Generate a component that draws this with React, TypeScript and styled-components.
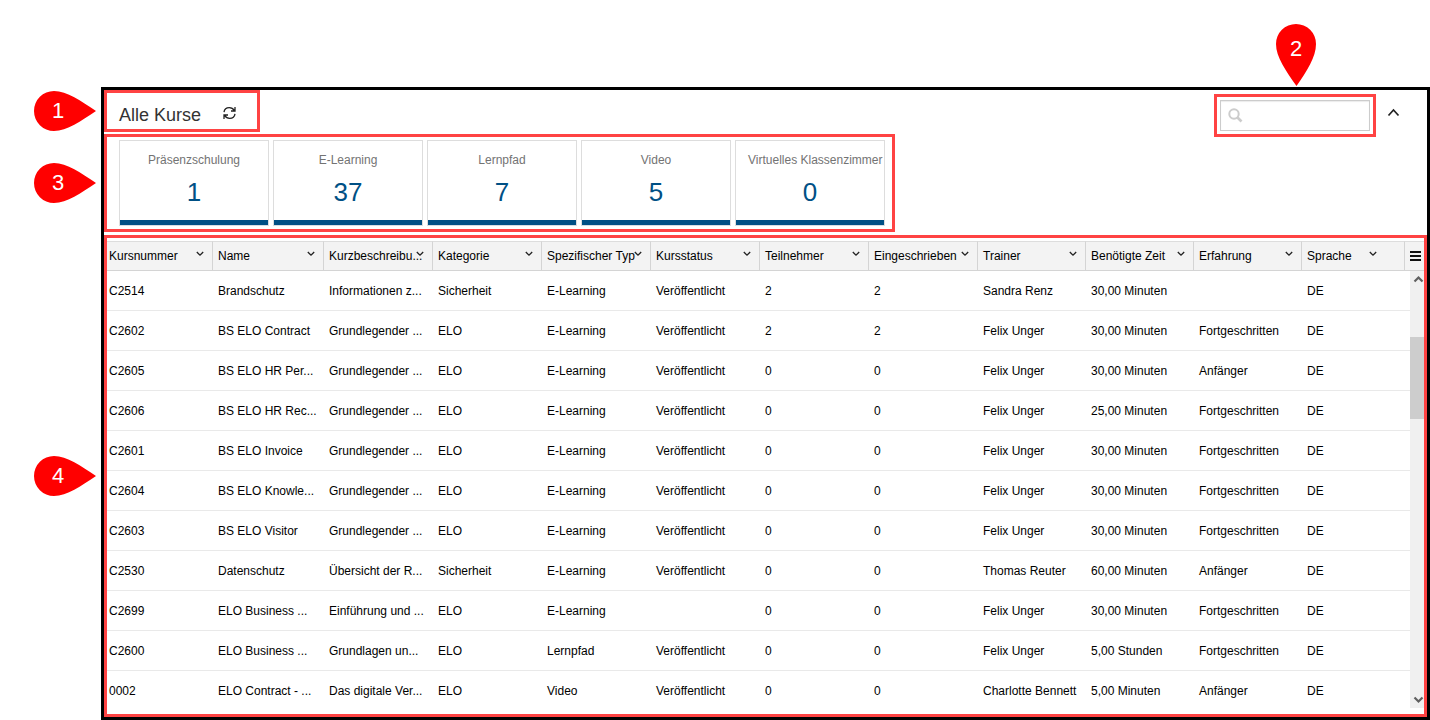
import React from "react";
import styled, { createGlobalStyle, css } from "styled-components";

const GlobalStyle = createGlobalStyle`
  * { box-sizing: border-box; }
  body {
    margin: 0;
    background: #fff;
    font-family: "Liberation Sans", Arial, sans-serif;
    font-size: 12px;
    color: #000;
  }
  button { font: inherit; }
`;

const Page = styled.div`
  display: flex;
  flex-direction: column;
  min-height: 100vh;
  padding: 87px 0 0 101px;
`;

const Frame = styled.main`
  flex: 1;
  display: flex;
  flex-direction: column;
  border: 3px solid #000;
`;

const marked = css`
  position: relative;
  &::after {
    content: "";
    position: absolute;
    inset: 0;
    border: 3px solid #ff4343;
    pointer-events: none;
  }
`;

const TopBar = styled.header`
  display: flex;
  align-items: flex-start;
  height: 44px;
`;

const TitleArea = styled.div`
  ${marked}
  display: flex;
  align-items: center;
  gap: 22px;
  width: 156px;
  height: 42px;
  padding: 8px 0 0 15px;
`;

const Title = styled.h1`
  margin: 0;
  font-size: 18px;
  line-height: 20px;
  font-weight: 400;
  color: #333;
`;

const IconButton = styled.button`
  display: flex;
  padding: 0;
  border: 0;
  background: none;
  cursor: pointer;
`;

const RefreshButton = styled(IconButton)`
  padding-bottom: 4px;
`;

const SearchArea = styled.div`
  ${marked}
  display: flex;
  width: 162px;
  height: 43px;
  margin: 4px 0 0 auto;
  padding: 6px;
`;

const SearchBox = styled.label`
  flex: 1;
  min-width: 0;
  display: flex;
  align-items: center;
  padding-left: 7px;
  border: 1px solid #ccc;
  background: #fff;
  box-shadow: inset 0 1px 1px rgba(0, 0, 0, 0.08);
`;

const SearchInput = styled.input`
  flex: 1;
  min-width: 0;
  height: 100%;
  padding: 0 6px;
  border: 0;
  outline: 0;
  background: none;
  font: inherit;
`;

const CollapseButton = styled(IconButton)`
  margin: 18px 27px 0 11px;
`;

const Tiles = styled.section`
  ${marked}
  align-self: flex-start;
  display: flex;
  gap: 4px;
  width: 791px;
  height: 98px;
  padding: 6px 10px 6px 15px;
`;

const Tile = styled.button`
  flex: 0 0 150px;
  min-width: 0;
  display: flex;
  flex-direction: column;
  padding: 0;
  border: 1px solid #ddd;
  border-bottom-color: #d5dde3;
  background: #fff;
  box-shadow: inset 0 -5px #005085;
  text-align: center;
`;

const TileLabel = styled.span`
  align-self: stretch;
  padding: 12px 12px 0;
  line-height: 14px;
  white-space: nowrap;
  color: #737373;
`;

const TileCount = styled.span`
  align-self: stretch;
  padding-top: 10px;
  font-size: 26px;
  line-height: 30px;
  color: #005085;
`;

const GridArea = styled.section`
  ${marked}
  flex: 1;
  margin-top: 3px;
  padding: 6px 0 9px;
`;

const GridBody = styled.div`
  position: relative;
`;

const Table = styled.table`
  width: 100%;
  table-layout: fixed;
  border-collapse: separate;
  border-spacing: 0;
`;

const HeadCell = styled.th`
  position: relative;
  height: 30px;
  padding: 0 0 0 5px;
  border: solid #d4d4d4;
  border-width: 1px 1px 1px 0;
  border-top-color: #ddd;
  background: #f3f3f3;
  font-weight: 400;
  line-height: 16px;
  text-align: left;
  white-space: nowrap;
`;

const MenuCell = styled(HeadCell)`
  border-right: 0;
`;

const SortButton = styled(IconButton)<{ $end: number }>`
  position: absolute;
  top: 9px;
  right: ${(p) => p.$end}px;
`;

const Cell = styled.td`
  height: 40px;
  padding: 0 0 0 5px;
  border-bottom: 1px solid #e9e9e9;
  white-space: nowrap;
  overflow: hidden;
`;

const Row = styled.tr`
  &:last-child ${Cell} {
    height: 37px;
    padding-top: 2px;
    border-bottom: 0;
  }
`;

const ScrollTrack = styled.div`
  position: absolute;
  top: 30px;
  right: 3px;
  bottom: 0;
  width: 14px;
  display: flex;
  flex-direction: column;
  background: #f0f0f0;
`;

const ScrollThumb = styled.div`
  height: 82px;
  margin: 50px 0 auto;
  background: #cdcdcd;
`;

const ScrollButton = styled(IconButton)`
  height: 16px;
  align-items: center;
  justify-content: flex-end;
`;

const PinBox = styled.span<{ $up?: boolean }>`
  position: absolute;
  ${(p) =>
    p.$up
      ? "left: 50%; bottom: calc(100% + 8px); width: 40px; height: 62px; margin-left: -19px;"
      : "left: -70px; top: 50%; width: 62px; height: 40px; margin-top: -20px;"}
`;

const PinShape = styled.svg`
  position: absolute;
  inset: 0;
`;

const PinNumber = styled.span<{ $up?: boolean }>`
  position: relative;
  display: block;
  width: ${(p) => (p.$up ? 40 : 48)}px;
  font-size: 22px;
  line-height: ${(p) => (p.$up ? 50 : 40)}px;
  text-align: center;
  color: #fff;
`;

function Pin({ n, up }: { n: number; up?: boolean }) {
  return (
    <PinBox $up={up}>
      <PinShape width={up ? 40 : 62} height={up ? 62 : 40} fill="#f00" aria-hidden="true">
        {up ? (
          <path d="M20.500 62C10 47 0 33 0 20A20 20 0 0 1 40 20C40 33 31 47 20.500 62Z" />
        ) : (
          <path d="M62 20C47 10 33 0 20 0A20 20 0 0 0 20 40C33 40 47 30 62 20Z" />
        )}
      </PinShape>
      <PinNumber $up={up}>{n}</PinNumber>
    </PinBox>
  );
}

const RefreshIcon = () => (
  <svg width="13" height="14" viewBox="0 0 13 14" fill="none" stroke="#222" strokeWidth="1.3">
    <path d="M1 6.2C1.4 3.4 3.6 1.7 6.3 1.7C8.5 1.7 10.2 2.7 11.4 4.6M12 1V5H8" />
    <path d="M12 7.8C11.6 10.6 9.4 12.3 6.7 12.3C4.500 12.3 2.800 11.300 1.6 9.400M1 13V9H5" />
  </svg>
);

const SearchIcon = () => (
  <svg width="15" height="15" viewBox="0 0 15 15" fill="none" stroke="#ccc">
    <circle cx="6" cy="6" r="4.700" strokeWidth="2" />
    <path d="M9.500 9.500L13.500 13.500" strokeWidth="2.600" />
  </svg>
);

const CollapseIcon = () => (
  <svg width="13" height="9" viewBox="0 0 13 9" fill="none" stroke="#222" strokeWidth="1.700">
    <path d="M1.500 7.500L6.500 2L11.500 7.500" />
  </svg>
);

const SortIcon = () => (
  <svg width="8" height="6" viewBox="0 0 8 6" fill="none" stroke="#222" strokeWidth="1.300">
    <path d="M0.800 1L4 4.200L7.200 1" />
  </svg>
);

const MenuIcon = () => (
  <svg width="11" height="10" viewBox="0 0 11 10" fill="#111">
    <path d="M0 0H11V2H0ZM0 4H11V6H0ZM0 8H11V10H0Z" />
  </svg>
);

const ScrollIcon = ({ down }: { down?: boolean }) => (
  <svg width="11" height="8" viewBox="0 0 11 8" fill="none" stroke="#606060" strokeWidth="2.200">
    <path d={down ? "M1.500 1.500L5.500 5.500L9.500 1.500" : "M1.500 6.500L5.500 2.500L9.500 6.500"} />
  </svg>
);

const tiles: [string, number][] = [
  ["Präsenzschulung", 1],
  ["E-Learning", 37],
  ["Lernpfad", 7],
  ["Video", 5],
  ["Virtuelles Klassenzimmer", 0],
];

const columns: { label: string; width?: number }[] = [
  { label: "Kursnummer", width: 109 },
  { label: "Name", width: 111 },
  { label: "Kurzbeschreibu...", width: 109 },
  { label: "Kategorie", width: 109 },
  { label: "Spezifischer Typ", width: 109 },
  { label: "Kursstatus", width: 109 },
  { label: "Teilnehmer", width: 109 },
  { label: "Eingeschrieben", width: 109 },
  { label: "Trainer", width: 108 },
  { label: "Benötigte Zeit", width: 108 },
  { label: "Erfahrung", width: 108 },
  { label: "Sprache" },
];

const V = "Veröffentlicht";
const F = "Fortgeschritten";
const rows: string[][] = [
  ["C2514", "Brandschutz", "Informationen z...", "Sicherheit", "E-Learning", V, "2", "2", "Sandra Renz", "30,00 Minuten", "", "DE"],
  ["C2602", "BS ELO Contract", "Grundlegender ...", "ELO", "E-Learning", V, "2", "2", "Felix Unger", "30,00 Minuten", F, "DE"],
  ["C2605", "BS ELO HR Per...", "Grundlegender ...", "ELO", "E-Learning", V, "0", "0", "Felix Unger", "30,00 Minuten", "Anfänger", "DE"],
  ["C2606", "BS ELO HR Rec...", "Grundlegender ...", "ELO", "E-Learning", V, "0", "0", "Felix Unger", "25,00 Minuten", F, "DE"],
  ["C2601", "BS ELO Invoice", "Grundlegender ...", "ELO", "E-Learning", V, "0", "0", "Felix Unger", "30,00 Minuten", F, "DE"],
  ["C2604", "BS ELO Knowle...", "Grundlegender ...", "ELO", "E-Learning", V, "0", "0", "Felix Unger", "30,00 Minuten", F, "DE"],
  ["C2603", "BS ELO Visitor", "Grundlegender ...", "ELO", "E-Learning", V, "0", "0", "Felix Unger", "30,00 Minuten", F, "DE"],
  ["C2530", "Datenschutz", "Übersicht der R...", "Sicherheit", "E-Learning", V, "0", "0", "Thomas Reuter", "60,00 Minuten", "Anfänger", "DE"],
  ["C2699", "ELO Business ...", "Einführung und ...", "ELO", "E-Learning", "", "0", "0", "Felix Unger", "30,00 Minuten", F, "DE"],
  ["C2600", "ELO Business ...", "Grundlagen un...", "ELO", "Lernpfad", V, "0", "0", "Felix Unger", "5,00 Stunden", F, "DE"],
  ["0002", "ELO Contract - ...", "Das digitale Ver...", "ELO", "Video", V, "0", "0", "Charlotte Bennett", "5,00 Minuten", "Anfänger", "DE"],
];

export default function App() {
  return (
    <Page>
      <GlobalStyle />
      <Frame>
        <TopBar>
          <TitleArea>
            <Title>Alle Kurse</Title>
            <RefreshButton aria-label="Aktualisieren">
              <RefreshIcon />
            </RefreshButton>
            <Pin n={1} />
          </TitleArea>
          <SearchArea>
            <SearchBox>
              <SearchIcon />
              <SearchInput type="text" aria-label="Suche" />
            </SearchBox>
            <Pin n={2} up />
          </SearchArea>
          <CollapseButton aria-label="Einklappen">
            <CollapseIcon />
          </CollapseButton>
        </TopBar>

        <Tiles>
          {tiles.map(([label, count]) => (
            <Tile key={label}>
              <TileLabel>{label}</TileLabel>
              <TileCount>{count}</TileCount>
            </Tile>
          ))}
          <Pin n={3} />
        </Tiles>

        <GridArea>
          <GridBody>
            <Table>
              <colgroup>
                {columns.map((c) => (
                  <col key={c.label} width={c.width} />
                ))}
                <col width={22} />
              </colgroup>
              <thead>
                <tr>
                  {columns.map((c) => (
                    <HeadCell key={c.label} scope="col">
                      {c.label}
                      <SortButton $end={c.width ? 8 : 27} aria-label={`${c.label} sortieren`}>
                        <SortIcon />
                      </SortButton>
                    </HeadCell>
                  ))}
                  <MenuCell>
                    <IconButton aria-label="Spaltenmenü">
                      <MenuIcon />
                    </IconButton>
                  </MenuCell>
                </tr>
              </thead>
              <tbody>
                {rows.map((r) => (
                  <Row key={r[0]}>
                    {r.map((text, i) => (
                      <Cell key={i}>{text}</Cell>
                    ))}
                    <Cell />
                  </Row>
                ))}
              </tbody>
            </Table>
            <ScrollTrack>
              <ScrollButton aria-label="Nach oben">
                <ScrollIcon />
              </ScrollButton>
              <ScrollThumb />
              <ScrollButton aria-label="Nach unten">
                <ScrollIcon down />
              </ScrollButton>
            </ScrollTrack>
          </GridBody>
          <Pin n={4} />
        </GridArea>
      </Frame>
    </Page>
  );
}
